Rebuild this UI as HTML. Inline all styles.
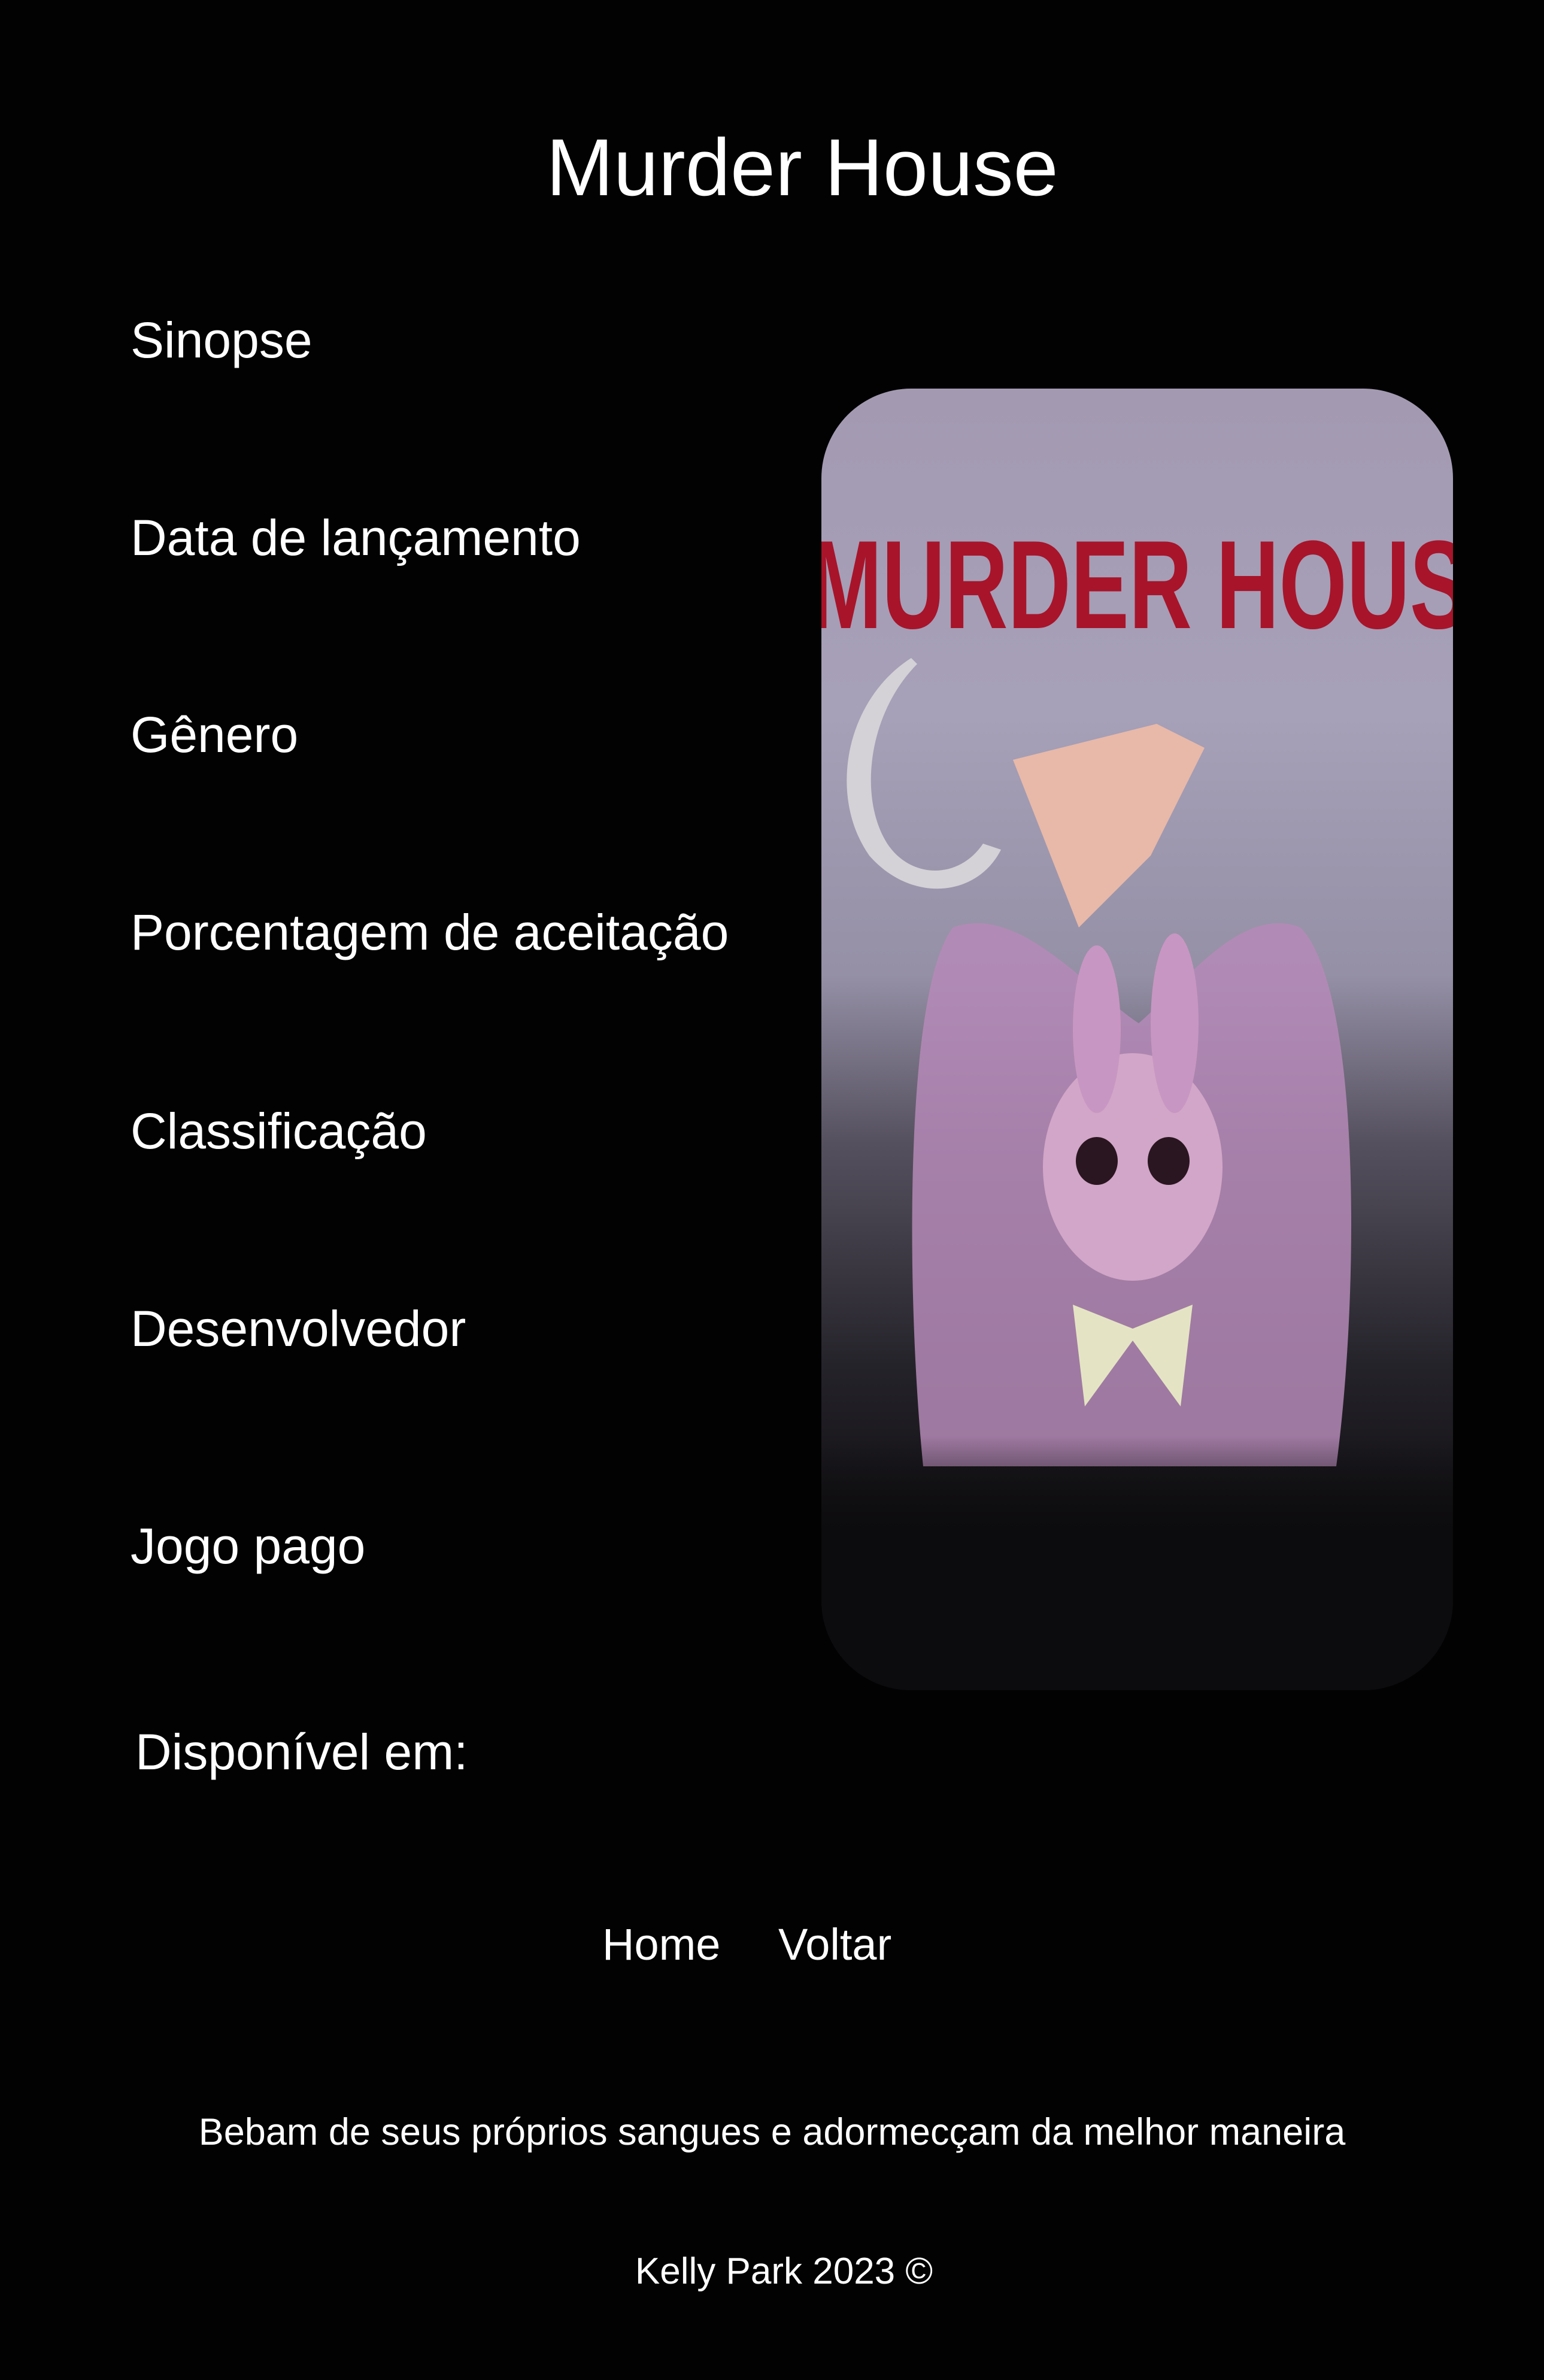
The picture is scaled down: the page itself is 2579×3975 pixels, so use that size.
<!DOCTYPE html>
<html><head><meta charset="utf-8"><style>
html,body{margin:0;padding:0;background:#030203;}
body{width:2579px;height:3975px;position:relative;overflow:hidden;font-family:"Liberation Sans","DejaVu Sans",sans-serif;color:#fff;}
.t{position:absolute;white-space:nowrap;line-height:1;}
.lab{left:218px;font-size:84px;}
#img{position:absolute;left:1372px;top:649px;width:1055px;height:2174px;border-radius:150px;overflow:hidden;
background:linear-gradient(180deg,#a39ab2 0%,#a6a0b8 25%,#9590a6 45%,#55505e 58%,#25232a 75%,#0d0c0e 90%,#0b0a0c 100%);}
</style></head><body>
<div class="t" style="left:0;width:2680px;text-align:center;top:212px;font-size:135px;">Murder House</div>
<div class="t lab" style="top:526px;">Sinopse</div>
<div class="t lab" style="top:856px;">Data de lançamento</div>
<div class="t lab" style="top:1185px;">Gênero</div>
<div class="t lab" style="top:1515px;">Porcentagem de aceitação</div>
<div class="t lab" style="top:1847px;">Classificação</div>
<div class="t lab" style="top:2177px;">Desenvolvedor</div>
<div class="t lab" style="top:2540px;">Jogo pago</div>
<div class="t lab" style="top:2884px;left:226px;">Disponível em:</div>
<div id="img">
<svg width="1055" height="2174" viewBox="0 0 1055 2174">
<text x="-20" y="400" font-family="Liberation Sans" font-weight="bold" font-size="210" fill="#a8142a" textLength="1100" lengthAdjust="spacingAndGlyphs">MURDER HOUS</text>
<path d="M150 450 C40 520 10 680 80 780 C150 860 260 850 300 770 L270 760 C230 820 150 820 110 760 C60 680 80 540 160 460Z" fill="#d4d2d6"/>
<path d="M320 620 L560 560 L640 600 L550 780 L430 900 Z" fill="#e8b9a8"/>
<path d="M220 900 C140 1000 140 1500 170 1800 L860 1800 C900 1500 900 1000 800 900 C700 860 600 1000 530 1060 C440 1000 330 860 220 900Z" fill="#b58ab7" opacity="0.85"/>
<ellipse cx="520" cy="1300" rx="150" ry="190" fill="#d2a6c8"/>
<ellipse cx="460" cy="1070" rx="40" ry="140" fill="#c896c2"/>
<ellipse cx="590" cy="1060" rx="40" ry="150" fill="#c896c2"/>
<ellipse cx="460" cy="1290" rx="35" ry="40" fill="#2a1620"/>
<ellipse cx="580" cy="1290" rx="35" ry="40" fill="#2a1620"/>
<path d="M420 1530 L520 1570 L620 1530 L600 1700 L520 1590 L440 1700Z" fill="#e4e4c4"/>
<rect x="0" y="1750" width="1055" height="424" fill="url(#f)"/>
<defs><linearGradient id="f" x1="0" y1="0" x2="0" y2="1"><stop offset="0" stop-color="#0c0b0d" stop-opacity="0"/><stop offset="0.4" stop-color="#0c0b0d"/></linearGradient></defs>
</svg>
</div>
<div class="t" style="left:1006px;top:3211px;font-size:74px;">Home</div>
<div class="t" style="left:1300px;top:3211px;font-size:74px;">Voltar</div>
<div class="t" style="left:0;width:2579px;text-align:center;top:3530px;font-size:63px;">Bebam de seus próprios sangues e adormecçam da melhor maneira</div>
<div class="t" style="left:0;width:2619px;text-align:center;top:3763px;font-size:62px;">Kelly Park 2023 ©</div>
</body></html>
